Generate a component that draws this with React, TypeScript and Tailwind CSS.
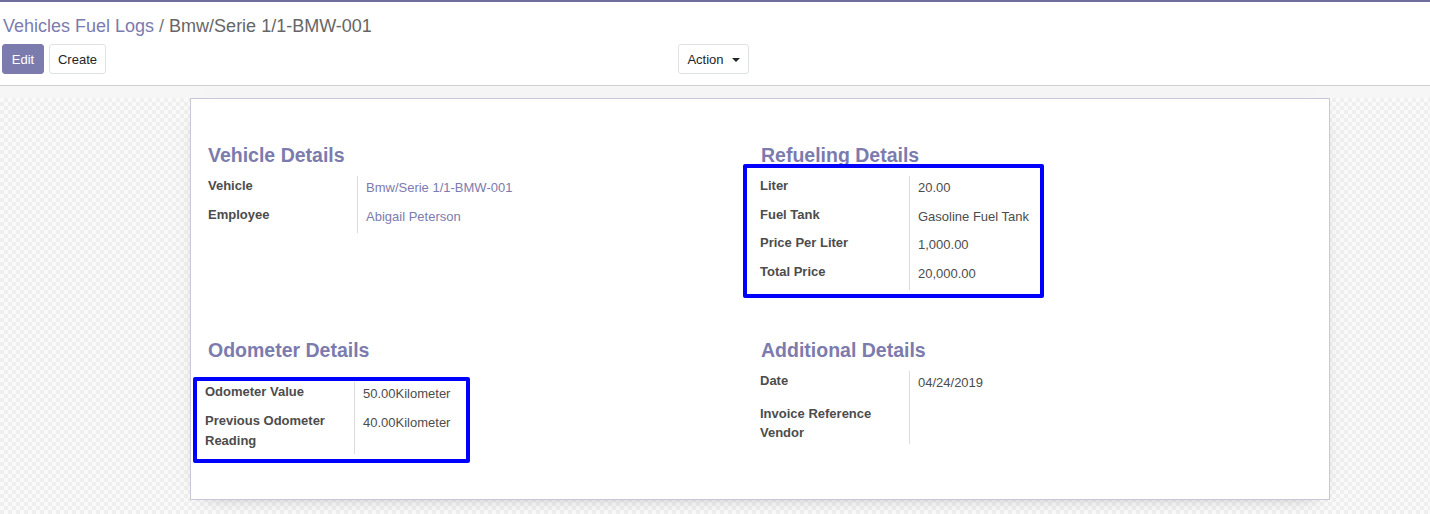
import React from "react";

type Row = {
  label: string;
  value?: string;
  link?: boolean;
  h: string;
};

const vehicleRows: Row[] = [
  { label: "Vehicle", value: "Bmw/Serie 1/1-BMW-001", link: true, h: "h-[28.5px]" },
  { label: "Employee", value: "Abigail Peterson", link: true, h: "h-[28.5px]" },
];

const refuelingRows: Row[] = [
  { label: "Liter", value: "20.00", h: "h-[28.5px]" },
  { label: "Fuel Tank", value: "Gasoline Fuel Tank", h: "h-[28.5px]" },
  { label: "Price Per Liter", value: "1,000.00", h: "h-[28.5px]" },
  { label: "Total Price", value: "20,000.00", h: "h-[28.5px]" },
];

const odometerRows: Row[] = [
  { label: "Odometer Value", value: "50.00Kilometer", h: "h-[29px]" },
  { label: "Previous Odometer Reading", value: "40.00Kilometer", h: "h-[43px]" },
];

const additionalRows: Row[] = [
  { label: "Date", value: "04/24/2019", h: "h-[32.5px]" },
  { label: "Invoice Reference", h: "h-[19.5px]" },
  { label: "Vendor", h: "h-[21px]" },
];

function FieldTable({ rows }: { rows: Row[] }) {
  return (
    <div className="flex">
      {/* Labels */}
      <div className="w-[149px] shrink-0">
        {rows.map((r) => (
          <div
            key={r.label}
            className={`${r.h} pr-3 text-[13px] font-bold leading-[19.5px] text-[#4c4c4c]`}
          >
            {r.label}
          </div>
        ))}
      </div>
      {/* Values */}
      <div className="border-l border-[#dcdcdc] pl-[8px]">
        {rows.map((r) => (
          <div
            key={r.label}
            className={`${r.h} pt-[2px] text-[13px] leading-[19.5px] whitespace-nowrap ${
              r.link ? "text-[#7c7bad]" : "text-[#4c4c4c]"
            }`}
          >
            {r.value ?? ""}
          </div>
        ))}
      </div>
    </div>
  );
}

function Group({
  title,
  children,
}: {
  title: string;
  children: React.ReactNode;
}) {
  return (
    <div>
      <h2 className="h-[24px] text-[19.5px] font-bold leading-[24px] text-[#7c7bad] mb-[9px]">
        {title}
      </h2>
      {children}
    </div>
  );
}

export default function App() {
  return (
    <div className="w-[1430px] h-[514px] overflow-hidden bg-white font-['Liberation_Sans',Arial,sans-serif] border-t-2 border-[#6f6d9c]">
      {/* Control panel */}
      <div className="h-[84px] border-b border-[#cfcfcf] pt-[10px] pl-[3px]">
        <div className="h-[28px] text-[18px] leading-[28px]">
          <span className="text-[#7c7bad]">Vehicles Fuel Logs</span>
          <span className="text-[#777777]"> / </span>
          <span className="text-[#666666]">Bmw/Serie 1/1-BMW-001</span>
        </div>
        <div className="mt-[4px] -ml-[1px] w-[747px] flex justify-between">
          <div className="flex gap-[5px]">
            <button className="h-[30px] w-[42px] pt-px rounded-[3px] border border-[#7c7bad] bg-[#7c7bad] text-[13px] text-white">
              Edit
            </button>
            <button className="h-[30px] w-[57px] pt-px rounded-[3px] border border-[#dee2e6] bg-white text-[13px] text-[#212529]">
              Create
            </button>
          </div>
          <button className="h-[30px] w-[71px] pt-px flex items-center justify-center gap-[8px] rounded-[3px] border border-[#dee2e6] bg-white text-[13px] text-[#212529]">
            Action
            <span className="w-0 h-0 border-x-[4px] border-x-transparent border-t-[4px] border-t-[#212529]" />
          </button>
        </div>
      </div>

      {/* Band under control panel */}
      <div className="h-[12px] bg-[#f6f6f6]" />

      {/* Form background */}
      <div className="h-[416px] bg-[image:repeating-conic-gradient(#efefef_0_25%,#fafafa_0_50%)] bg-[length:8px_8px]">
        <div className="ml-[190px] w-[1140px] border border-[#c9c8d6] bg-white shadow-[0_5px_20px_-15px_rgba(0,0,0,0.6)] pt-[44px] pb-[45px] pl-[17px] pr-[15px]">
          <div className="grid grid-cols-2 gap-y-[48px]">
            <Group title="Vehicle Details">
              <FieldTable rows={vehicleRows} />
            </Group>

            <Group title="Refueling Details">
              <div className="relative -ml-[1px]">
                <FieldTable rows={refuelingRows} />
                <div className="absolute left-[-17px] top-[-12px] w-[301px] h-[134px] border-4 border-[#0000ff] rounded-[2px] pointer-events-none" />
              </div>
            </Group>

            <Group title="Odometer Details">
              <div className="pt-[11px]">
                <div className="relative -ml-[3px]">
                  <FieldTable rows={odometerRows} />
                  <div className="absolute left-[-12px] top-[-5px] w-[277px] h-[86px] border-4 border-[#0000ff] rounded-[2px] pointer-events-none" />
                </div>
              </div>
            </Group>

            <Group title="Additional Details">
              <div className="-ml-[1px]">
                <FieldTable rows={additionalRows} />
              </div>
            </Group>
          </div>
        </div>
      </div>
    </div>
  );
}
